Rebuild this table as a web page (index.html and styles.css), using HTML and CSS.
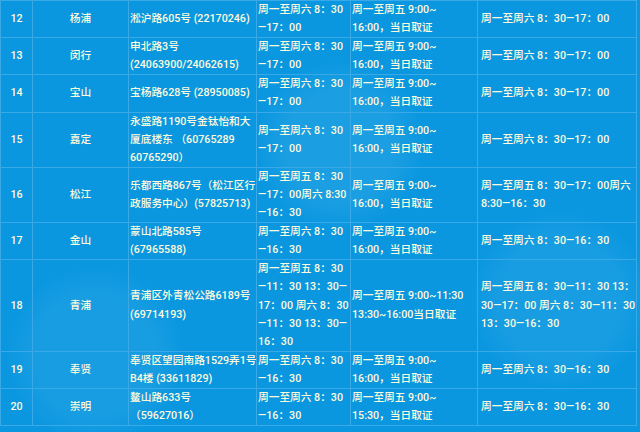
FILE: index.html
```html
<!DOCTYPE html>
<html lang="zh-CN">
<head>
<meta charset="utf-8">
<title>出入境受理点</title>
<link rel="stylesheet" href="styles.css">
</head>
<body>
<table class="sheet">
  <colgroup>
    <col class="c-no"><col class="c-dist"><col class="c-addr"><col class="c-hours"><col class="c-pick"><col class="c-other">
  </colgroup>
  <tbody>
    <tr>
      <td class="no">12</td><td class="dist">杨浦</td>
      <td>淞沪路605号 (22170246)</td>
      <td>周一至周六 8：30<br>—17：00</td>
      <td>周一至周五 9:00~<br>16:00，当日取证</td>
      <td class="other">周一至周六 8：30—17：00</td>
    </tr>
    <tr>
      <td class="no">13</td><td class="dist">闵行</td>
      <td>申北路3号<br>(24063900/24062615)</td>
      <td>周一至周六 8：30<br>—17：00</td>
      <td>周一至周五 9:00~<br>16:00，当日取证</td>
      <td class="other">周一至周六 8：30—17：00</td>
    </tr>
    <tr>
      <td class="no">14</td><td class="dist">宝山</td>
      <td>宝杨路628号 (28950085)</td>
      <td>周一至周六 8：30<br>—17：00</td>
      <td>周一至周五 9:00~<br>16:00，当日取证</td>
      <td class="other">周一至周六 8：30—17：00</td>
    </tr>
    <tr>
      <td class="no">15</td><td class="dist">嘉定</td>
      <td>永盛路1190号金钛怡和大<br>厦底楼东 （60765289<br>60765290）</td>
      <td>周一至周六 8：30<br>—17：00</td>
      <td>周一至周五 9:00~<br>16:00，当日取证</td>
      <td class="other">周一至周六 8：30—17：00</td>
    </tr>
    <tr>
      <td class="no">16</td><td class="dist">松江</td>
      <td>乐都西路867号（松江区行<br>政服务中心）(57825713)</td>
      <td>周一至周五 8：30<br>—17：00周六 8:30<br>—16：30</td>
      <td>周一至周五 9:00~<br>16:00，当日取证</td>
      <td class="other">周一至周五 8：30—17：00周六<br>8:30—16：30</td>
    </tr>
    <tr>
      <td class="no">17</td><td class="dist">金山</td>
      <td>蒙山北路585号<br>(67965588)</td>
      <td>周一至周六 8：30<br>—16：30</td>
      <td>周一至周五 9:00~<br>16:00，当日取证</td>
      <td class="other">周一至周六 8：30—16：30</td>
    </tr>
    <tr>
      <td class="no">18</td><td class="dist">青浦</td>
      <td>青浦区外青松公路6189号<br>(69714193)</td>
      <td>周一至周五 8：30<br>—11：30 13：30—<br>17：00 周六 8：30<br>—11：30 13：30—<br>16：30</td>
      <td>周一至周五 9:00~11:30<br>13:30~16:00当日取证</td>
      <td class="other">周一至周五 8：30—11：30 13：<br>30—17：00 周六 8：30—11：30<br>13：30—16：30</td>
    </tr>
    <tr>
      <td class="no">19</td><td class="dist">奉贤</td>
      <td>奉贤区望园南路1529弄1号<br>B4楼 (33611829)</td>
      <td>周一至周六 8：30<br>—16：30</td>
      <td>周一至周五 9:00~<br>16:00，当日取证</td>
      <td class="other">周一至周六 8：30—16：30</td>
    </tr>
    <tr>
      <td class="no">20</td><td class="dist">崇明</td>
      <td>鳌山路633号<br>（59627016）</td>
      <td>周一至周六 8：30<br>—16：30</td>
      <td>周一至周五 9:00~<br>15:30，当日取证</td>
      <td class="other">周一至周六 8：30—16：30</td>
    </tr>
  </tbody>
</table>
</body>
</html>
```

FILE: styles.css
```css
html, body {
  margin: 0;
  padding: 0;
}
body {
  width: 640px;
  height: 432px;
  overflow: hidden;
  background-color: #0a97e0;
  background-image:
    radial-gradient(circle at 340px 145px, rgba(255,255,255,0.07) 0, rgba(255,255,255,0.07) 55px, rgba(255,255,255,0) 85px),
    radial-gradient(circle at 95px 355px, rgba(255,255,255,0.06) 0, rgba(255,255,255,0.06) 60px, rgba(255,255,255,0) 90px),
    radial-gradient(circle at 560px 300px, rgba(255,255,255,0.06) 0, rgba(255,255,255,0.06) 60px, rgba(255,255,255,0) 90px);
  color: #fffadc;
  font-family: Roboto, "Noto Sans CJK SC", sans-serif;
  font-size: 10.7px;
  font-weight: 500;
}
.sheet {
  border-collapse: collapse;
  table-layout: fixed;
  width: 636px;
}
.c-no { width: 32px; }
.c-dist { width: 96px; }
.c-addr { width: 128px; }
.c-hours { width: 94px; }
.c-pick { width: 127px; }
.c-other { width: 159px; }
.sheet td {
  border: 1px solid #3aa9e8;
  padding: 0 0 0 1px;
  line-height: 18.1px;
  vertical-align: middle;
  white-space: nowrap;
  overflow: visible;
}
.sheet td.no,
.sheet td.dist {
  text-align: center;
  padding: 0;
}
.sheet td.other {
  padding-left: 3px;
}
```
